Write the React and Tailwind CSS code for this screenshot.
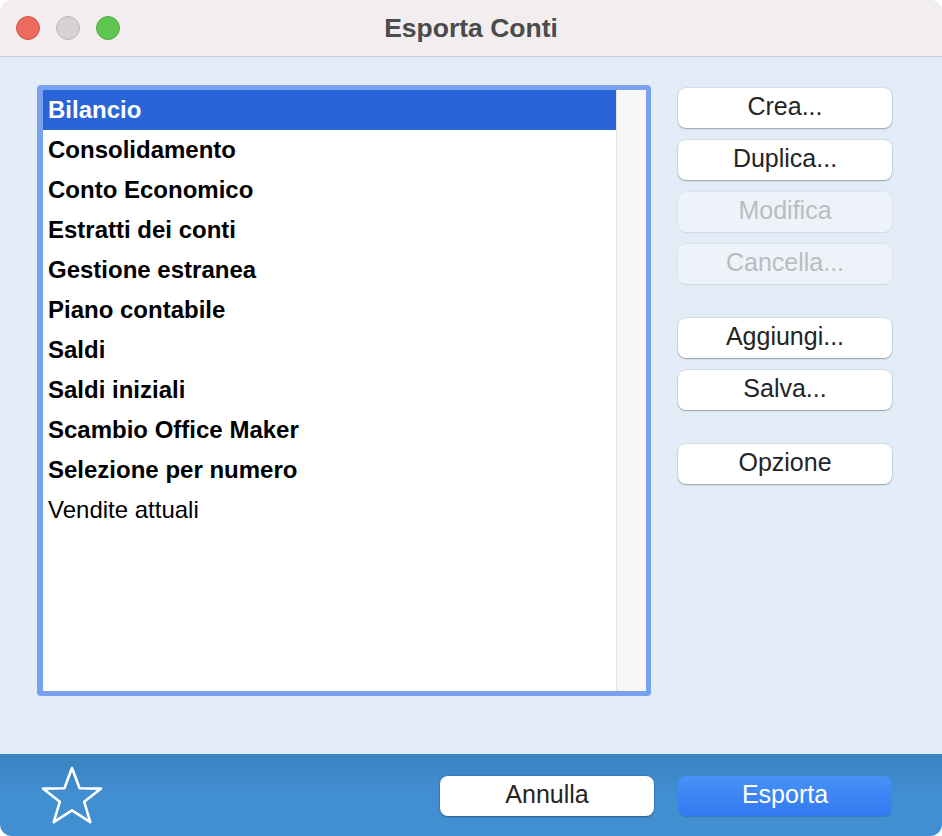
import React, { useState } from 'react';

const items = [
  { name: 'Bilancio', bold: true },
  { name: 'Consolidamento', bold: true },
  { name: 'Conto Economico', bold: true },
  { name: 'Estratti dei conti', bold: true },
  { name: 'Gestione estranea', bold: true },
  { name: 'Piano contabile', bold: true },
  { name: 'Saldi', bold: true },
  { name: 'Saldi iniziali', bold: true },
  { name: 'Scambio Office Maker', bold: true },
  { name: 'Selezione per numero', bold: true },
  { name: 'Vendite attuali', bold: false },
];

const SideButton = ({ label, disabled, className = '' }) => (
  <button
    disabled={disabled}
    className={`w-[214px] h-[40px] rounded-[8px] text-[25px] leading-none flex items-center justify-center pb-[4px] ${
      disabled
        ? 'bg-[#eef3f9] text-[#b9bdc2] shadow-[0_0_0_0.5px_rgba(0,0,0,0.06),0_1px_1px_rgba(0,0,0,0.06)]'
        : 'bg-white text-[#242424] shadow-[0_0_0_0.5px_rgba(0,0,0,0.12),0_1px_1.5px_rgba(0,0,0,0.28)]'
    } ${className}`}
  >
    {label}
  </button>
);

export default function App() {
  const [selected, setSelected] = useState(0);

  return (
    <div className="w-[942px] h-[836px] bg-white" style={{ fontFamily: '"Liberation Sans", Arial, sans-serif' }}>
      <div className="w-full h-full rounded-[12px] overflow-hidden flex flex-col bg-[#e2ecf6]">
        {/* Title bar */}
        <div className="relative h-[57px] shrink-0 bg-[#f2eeef] border-b border-[#c8ccd2] flex items-center justify-center">
          <div className="absolute left-[16px] top-[16px] flex gap-[16px]">
            <span className="w-[24px] h-[24px] rounded-full bg-[#ed6a5e] border border-[#d9544a]" />
            <span className="w-[24px] h-[24px] rounded-full bg-[#d7d3d3] border border-[#bfb9b9]" />
            <span className="w-[24px] h-[24px] rounded-full bg-[#61c554] border border-[#52ab45]" />
          </div>
          <h1 className="text-[26.5px] font-bold text-[#4b4b4b] leading-none">Esporta Conti</h1>
        </div>

        {/* Body */}
        <div className="flex-1 flex pt-[28px] pl-[37px]">
          <div className="w-[614px] h-[611px] border-[5px] border-l-[6px] border-[#78a1ef] rounded-[4px] bg-white flex">
            <div className="flex-1 flex flex-col">
              {items.map((item, i) => (
                <div
                  key={item.name}
                  onClick={() => setSelected(i)}
                  className={`h-[40px] flex items-center pl-[5px] text-[24px] leading-none ${
                    item.bold ? 'font-bold' : 'font-normal'
                  } ${selected === i ? 'bg-[#2a64d9] text-white' : 'text-black'}`}
                >
                  {item.name}
                </div>
              ))}
            </div>
            <div className="w-[30px] bg-[#f7f7f7] border-l border-[#e3e3e3]" />
          </div>

          <div className="ml-[27px] pt-[3px] flex flex-col gap-[12px]">
            <SideButton label="Crea..." />
            <SideButton label="Duplica..." />
            <SideButton label="Modifica" disabled />
            <SideButton label="Cancella..." disabled />
            <SideButton label="Aggiungi..." className="mt-[22px]" />
            <SideButton label="Salva..." />
            <SideButton label="Opzione" className="mt-[22px]" />
          </div>
        </div>

        {/* Footer */}
        <div className="h-[82px] shrink-0 bg-gradient-to-b from-[#3a83c2] via-[#418ed1] to-[#418ed1] flex items-start pt-[22px] pl-[40px] pr-[50px]">
          <svg width="64" height="60" viewBox="0 0 64 60" className="-mt-[11px]">
            <path
              d="M32 3 L39.6 23.2 L61 23.6 L44.2 36.8 L50.3 57.2 L32 45.3 L13.7 57.2 L19.8 36.8 L3 23.6 L24.4 23.2 Z"
              fill="none"
              stroke="white"
              strokeWidth="2.6"
              strokeLinejoin="round"
            />
          </svg>
          <div className="flex-1" />
          <button className="w-[214px] h-[40px] rounded-[8px] bg-white text-[#242424] text-[25px] leading-none pb-[4px] shadow-[0_0_0_0.5px_rgba(0,0,0,0.12),0_1px_2px_rgba(0,0,0,0.3)]">
            Annulla
          </button>
          <button className="ml-[24px] w-[214px] h-[40px] rounded-[8px] bg-gradient-to-b from-[#4891f6] to-[#3379f2] text-white text-[25px] leading-none pb-[4px] shadow-[0_1px_1px_rgba(0,0,0,0.15)]">
            Esporta
          </button>
        </div>
      </div>
    </div>
  );
}
